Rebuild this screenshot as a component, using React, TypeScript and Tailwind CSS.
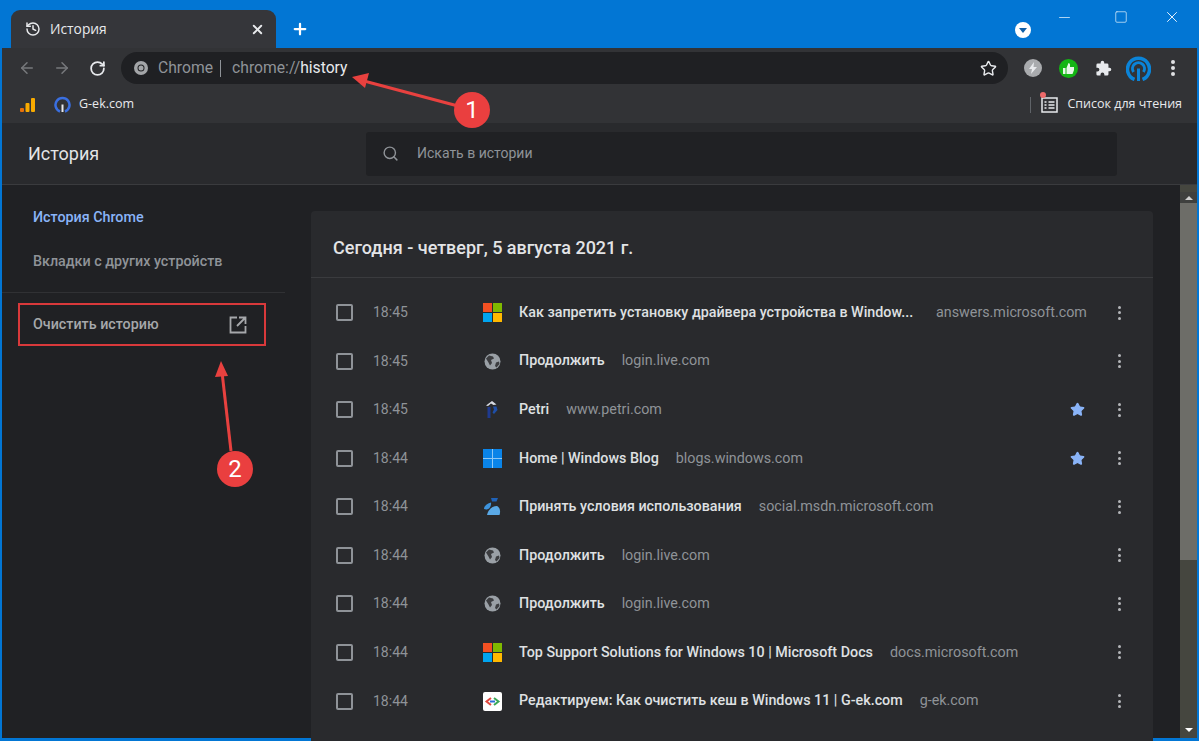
import { ArrowLeft, ArrowRight, History, Minus, Plus, RotateCw, Search, Square, Star, X } from 'lucide-react'

type Row = {
  time: string
  icon: 'ms' | 'globe' | 'petri' | 'win' | 'msdn' | 'gek'
  title: string
  domain: string
  starred?: boolean
  cut?: boolean
}

const rows: Row[] = [
  { time: '18:45', icon: 'ms', title: 'Как запретить установку драйвера устройства в Window...', domain: 'answers.microsoft.com', cut: true },
  { time: '18:45', icon: 'globe', title: 'Продолжить', domain: 'login.live.com' },
  { time: '18:45', icon: 'petri', title: 'Petri', domain: 'www.petri.com', starred: true },
  { time: '18:44', icon: 'win', title: 'Home | Windows Blog', domain: 'blogs.windows.com', starred: true },
  { time: '18:44', icon: 'msdn', title: 'Принять условия использования', domain: 'social.msdn.microsoft.com' },
  { time: '18:44', icon: 'globe', title: 'Продолжить', domain: 'login.live.com' },
  { time: '18:44', icon: 'globe', title: 'Продолжить', domain: 'login.live.com' },
  { time: '18:44', icon: 'ms', title: 'Top Support Solutions for Windows 10 | Microsoft Docs', domain: 'docs.microsoft.com' },
  { time: '18:44', icon: 'gek', title: 'Редактируем: Как очистить кеш в Windows 11 | G-ek.com', domain: 'g-ek.com' },
]

function Favicon({ kind }: { kind: Row['icon'] }) {
  if (kind === 'ms') {
    return (
      <svg width="19" height="19" viewBox="0 0 19 19">
        <rect width="9" height="9" fill="#f25022" />
        <rect x="10" width="9" height="9" fill="#7fba00" />
        <rect y="10" width="9" height="9" fill="#00a4ef" />
        <rect x="10" y="10" width="9" height="9" fill="#ffb900" />
      </svg>
    )
  }
  if (kind === 'win') {
    return (
      <svg width="19" height="19" viewBox="0 0 19 19">
        <rect width="19" height="19" fill="#0a84e8" />
        <path d="M9.500 0v19M0 9.500h19" stroke="#8ec8f5" strokeWidth="1" />
      </svg>
    )
  }
  if (kind === 'globe') {
    return (
      <svg width="17" height="17" viewBox="0 0 17 17" className="mx-[1px]">
        <circle cx="8.500" cy="8.500" r="8" fill="#9aa0a6" />
        <path d="M2 5.500 5 2.500l4 1 1 2-3 1.500 1 3-2 2.500-1.500-3zM12 9.500l3-1 .5 2.500-3 3.500-1.500-1.500z" fill="#3c3d40" />
      </svg>
    )
  }
  if (kind === 'petri') {
    return (
      <svg width="19" height="19" viewBox="0 0 19 19">
        <path d="M4.500 18V7h3v11z" fill="#1f3a8f" />
        <path d="M3 5.500 9 1l4.500 3.500-3 .5-2.500-1.500-3 2.500z" fill="#d8dbe2" />
        <path d="M10 6.500h3.500l1 3.500-3.500 4-1.500-1.500 1.500-3z" fill="#1f4fa8" />
      </svg>
    )
  }
  if (kind === 'msdn') {
    return (
      <svg width="19" height="19" viewBox="0 0 19 19">
        <path d="M8 1h7l-1.500 3.500H9z" fill="#1f62b8" />
        <path d="M1 12c0-3 3-5.500 7-6.500.5 4-2.500 8.500-7 6.500z" fill="#3d93dc" />
        <path d="M4 18c1-5 5-9 10-9 3.500 2 3.500 6 2.500 9z" fill="#5aa9e6" />
      </svg>
    )
  }
  return (
    <svg width="19" height="19" viewBox="0 0 19 19">
      <rect width="19" height="19" rx="2" fill="#fff" />
      <path d="M8 6 3.500 9.500 8 13" fill="none" stroke="#e0483e" strokeWidth="2" />
      <path d="m11 6 4.500 3.500L11 13" fill="none" stroke="#3aa757" strokeWidth="2" />
      <path d="M7 9.500h5" stroke="#2f6fd6" strokeWidth="2" />
    </svg>
  )
}

function Dots({ className = '', dot = 'size-[3px] bg-[#b4b6b9]', gap = 'gap-[2.500px]' }: { className?: string; dot?: string; gap?: string }) {
  return (
    <div className={`flex flex-col items-center ${gap} ${className}`}>
      <span className={`rounded-full ${dot}`} />
      <span className={`rounded-full ${dot}`} />
      <span className={`rounded-full ${dot}`} />
    </div>
  )
}

function HistoryRow({ row }: { row: Row }) {
  return (
    <div className="flex h-[48.55px] items-center">
      <span className="ml-[25px] size-[17px] shrink-0 rounded-[2px] border-2 border-[#8f9398]" />
      <span className="ml-[20px] w-[110px] shrink-0 text-[14px] text-[#8f9398]">{row.time}</span>
      <span className="flex w-[36px] shrink-0"><Favicon kind={row.icon} /></span>
      <span className={`text-[14.300px] font-medium text-[#dfe0e2] ${row.cut ? 'w-[394px] whitespace-nowrap' : ''}`}>{row.title}</span>
      <span className={`text-[14.300px] text-[#8f9398] ${row.cut ? 'ml-[23px]' : 'ml-[17px]'}`}>{row.domain}</span>
      <div className="ml-auto flex items-center">
        {row.starred && <Star size={15} className="mr-[33px] fill-[#8ab4f8] text-[#8ab4f8]" />}
        <Dots className="mr-[32px]" />
      </div>
    </div>
  )
}

export default function App() {
  return (
    <div className="relative flex h-[741px] w-[1199px] flex-col overflow-hidden bg-[#0276d4] font-['Roboto',sans-serif]">
      {/* tab strip */}
      <div className="flex h-[48px] shrink-0 items-end pl-[11px]">
        <div className="flex h-[38px] w-[265px] items-center rounded-t-[9px] bg-[#35363a] pl-[14px] pr-[11px] text-[#e8eaed]">
          <History size={16} strokeWidth={2.200} />
          <span className="ml-[9px] font-['Open_Sans',sans-serif] text-[13.800px]">История</span>
          <X size={15} strokeWidth={3} className="ml-auto" />
        </div>
        <Plus size={18} strokeWidth={3} className="mb-[10px] ml-[15px] text-white" />
        <div className="ml-auto flex h-full items-start">
          <div className="mr-[25px] mt-[22px] flex size-[16px] items-center justify-center rounded-full bg-white">
            <span className="mt-[1px] border-x-[4px] border-t-[5px] border-x-transparent border-t-[#0f5fa8]" />
          </div>
          <Minus size={17} strokeWidth={1.300} className="mr-[41px] mt-[9px] text-[#bcdcf5]" />
          <Square size={14} strokeWidth={1.300} className="mr-[35px] mt-[10px] text-[#d3e9fa]" />
          <X size={18} strokeWidth={1.300} className="mr-[18px] mt-[8px] text-[#e6f3fd]" />
        </div>
      </div>

      {/* window contents */}
      <div className="ml-[2px] mr-[2px] flex min-h-0 flex-1 flex-col mb-[3px]">
        {/* toolbar */}
        <div className="flex h-[40px] shrink-0 items-center bg-[#323336] pl-[16px]">
          <ArrowLeft size={18} className="text-[#77797c]" />
          <ArrowRight size={18} className="ml-[17px] text-[#77797c]" />
          <RotateCw size={17} strokeWidth={2.500} className="ml-[18px] text-[#e8eaed]" />
          <div className="ml-[15px] flex h-[32px] w-[887px] items-center rounded-full bg-[#1f2023] pl-[13px] pr-[11px] text-[15.700px]">
            <svg width="14" height="14" viewBox="0 0 14 14">
              <circle cx="7" cy="7" r="7" fill="#a3a5a8" />
              <circle cx="7" cy="7" r="3.500" fill="#202124" />
              <circle cx="7" cy="7" r="2.500" fill="#a3a5a8" />
            </svg>
            <span className="ml-[10px] text-[#8f9398]">Chrome</span>
            <span className="ml-[7px] h-[17px] w-px bg-[#8f9398]" />
            <span className="ml-[11px] text-[#8f9398]">chrome://</span>
            <span className="text-[#e8eaed]">history</span>
            <Star size={17} className="ml-auto text-[#e8eaed]" />
          </div>
          <div className="ml-[16px] flex size-[18px] items-center justify-center rounded-full bg-[#a9abae]">
            <svg width="8" height="12" viewBox="0 0 8 12"><path d="M5 0 0 7h3l-1 5 6-7H4.500z" fill="#e8eaed" /></svg>
          </div>
          <div className="ml-[17px] flex size-[19px] items-center justify-center rounded-full bg-[#14b514]">
            <svg width="11" height="11" viewBox="0 0 11 11"><path d="M0 5h2.500v6H0zM3.500 5 5.500 0c1 0 1.500 1 1.500 2v2h4v3l-1.500 4h-6z" fill="#e8f7e8" /></svg>
          </div>
          <svg width="17" height="17" viewBox="0 0 24 24" className="ml-[17px]">
            <path d="M20.500 11H19V7a2 2 0 0 0-2-2h-4V3.500a2.500 2.500 0 0 0-5 0V5H4a2 2 0 0 0-2 2v3.800h1.500a2.700 2.700 0 0 1 0 5.400H2V20a2 2 0 0 0 2 2h3.800v-1.500a2.700 2.700 0 0 1 5.400 0V22H17a2 2 0 0 0 2-2v-4h1.500a2.500 2.500 0 0 0 0-5z" fill="#e8eaed" />
          </svg>
          <svg width="25" height="25" viewBox="0 0 25 25" className="ml-[14px]">
            <path d="M8.500 23.500A11 11 0 1 1 16.500 23.500" fill="none" stroke="#0b84d8" strokeWidth="3.500" />
            <path d="M7.500 16a6 6 0 1 1 10 0" fill="none" stroke="#0b84d8" strokeWidth="3" />
            <path d="M12.500 12.500V25" stroke="#0b84d8" strokeWidth="3" />
          </svg>
          <Dots className="ml-[20px]" dot="size-[3.500px] bg-[#e0e1e3]" gap="gap-[2.500px]" />
        </div>

        {/* bookmarks */}
        <div className="flex h-[35px] shrink-0 items-center bg-[#323336] pb-[2px] pl-[18px] text-[#e8eaed]">
          <svg width="15" height="14" viewBox="0 0 15 14">
            <rect x="0" y="10" width="4" height="4" rx="1" fill="#e8710a" />
            <rect x="5.500" y="5" width="4" height="9" rx="1" fill="#f9ab00" />
            <rect x="11" y="0" width="4" height="14" rx="1" fill="#f9ab00" />
          </svg>
          <svg width="17" height="17" viewBox="0 0 17 17" className="ml-[19px]">
            <path d="M6 15.500A7 7 0 1 1 11 15.500" fill="none" stroke="#3a6fe0" strokeWidth="2.500" />
            <path d="M8.500 8.500V16" stroke="#e8eaed" strokeWidth="2" />
          </svg>
          <span className="ml-[8px] font-['Open_Sans',sans-serif] text-[12.500px]">G-ek.com</span>
          <span className="ml-auto h-[16px] w-px bg-[#5f6368]" />
          <div className="relative ml-[10px] mr-[15px] flex items-center">
            <svg width="17" height="16" viewBox="0 0 17 16">
              <rect x="1" y="1" width="15" height="14" fill="none" stroke="#e8eaed" strokeWidth="1.500" />
              <path d="M3.500 5h2M7.500 5h6M3.500 8h2M7.500 8h6M3.500 11h2M7.500 11h6" stroke="#e8eaed" strokeWidth="1.300" />
            </svg>
            <span className="absolute -left-[1px] -top-[3px] size-[6px] rounded-full bg-[#ee6a6a]" />
            <span className="ml-[9px] font-['Open_Sans',sans-serif] text-[12.500px]">Список для чтения</span>
          </div>
        </div>

        {/* page header */}
        <div className="flex h-[62px] shrink-0 items-center border-b border-[#3a3b3e] bg-[#292a2d]">
          <span className="ml-[26px] w-[338px] text-[18px] text-[#e3e4e6]">История</span>
          <div className="flex h-[44px] w-[751px] items-center rounded-[3px] bg-[#202124] pl-[16px] text-[14px] text-[#8f9398]">
            <Search size={17} className="text-[#8f9398]" />
            <span className="ml-[18px]">Искать в истории</span>
          </div>
        </div>

        {/* body */}
        <div className="flex min-h-0 flex-1 bg-[#202124]">
          <div className="w-[309px] shrink-0 pr-[26px] pt-[22px] text-[14.300px] font-medium">
            <div className="flex h-[22px] items-center pl-[31px] text-[#8ab4f8]">История Chrome</div>
            <div className="mt-[22px] flex h-[22px] items-center pl-[31px] text-[#8f9398]">Вкладки с других устройств</div>
            <div className="mt-[19px] h-px bg-[#303134]" />
            <div className="ml-[16px] mr-[19px] mt-[10px] flex h-[43px] items-center border-2 border-[#d8393b] pl-[13px] pr-[17px] text-[#a6a8ab]">
              Очистить историю
              <svg width="18" height="18" viewBox="0 0 18 18" className="ml-auto">
                <path d="M8 1.500H1.500v15h15V10M10 1.500h6.500V8M16 2 8 10" fill="none" stroke="#a6a8ab" strokeWidth="1.800" />
              </svg>
            </div>
          </div>

          <div className="min-w-0 flex-1 pt-[26px]">
            <div className="h-[600px] w-[842px] rounded-t-[4px] bg-[#292a2d]">
              <div className="flex h-[67px] items-center border-b border-[#3a3b3e] pl-[22px] pt-[6px] text-[18px] font-medium text-[#e3e4e6]">
                Сегодня - четверг, 5 августа 2021 г.
              </div>
              <div className="pt-[10.400px]">
                {rows.map((row, i) => (
                  <HistoryRow key={i} row={row} />
                ))}
              </div>
            </div>
          </div>

          {/* scrollbar */}
          <div className="flex w-[17px] shrink-0 flex-col bg-[#45463f] pt-[7px]">
            <div className="flex h-[11px] items-center justify-center bg-[#3f403e]">
              <span className="border-x-[4px] border-b-[4px] border-x-transparent border-b-[#d0d0d0]" />
            </div>
            <div className="h-[357px] bg-[#6d6d68]" />
            <div className="mt-auto flex h-[17px] items-center justify-center">
              <span className="border-x-[4px] border-t-[4px] border-x-transparent border-t-white" />
            </div>
          </div>
        </div>
      </div>

      {/* annotations */}
      <svg width="1199" height="741" viewBox="0 0 1199 741" className="pointer-events-none absolute left-0 top-0">
        <path d="M458 106 364 81" stroke="#e8413f" strokeWidth="3" />
        <path d="m352 77 17-4-4 15z" fill="#e8413f" />
        <path d="M231 451 222 372" stroke="#e8413f" strokeWidth="3" />
        <path d="m221 361 7 15-13 1z" fill="#e8413f" />
      </svg>
      <div className="absolute left-[454px] top-[92px] flex size-[36px] items-center justify-center rounded-full bg-[#ea3f3f] text-[24px] text-white">1</div>
      <div className="absolute left-[217px] top-[451px] flex size-[36px] items-center justify-center rounded-full bg-[#ea3f3f] text-[24px] text-white">2</div>
    </div>
  )
}
